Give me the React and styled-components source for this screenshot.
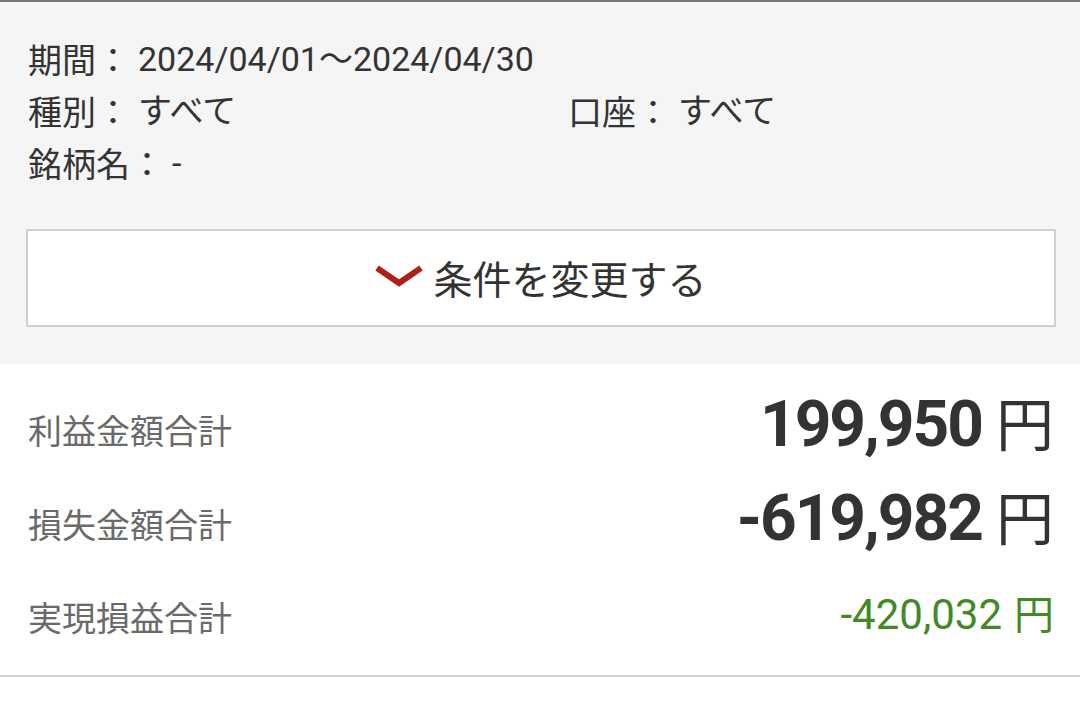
import React from "react";
import styled, { createGlobalStyle } from "styled-components";

const Global = createGlobalStyle`
  html, body { margin: 0; padding: 0; background: #ffffff; }
  body {
    font-family: Roboto, "Noto Sans CJK JP", sans-serif;
    color: #333333;
  }
  * { box-sizing: border-box; }
`;

const Page = styled.div`
  width: 1080px;
  height: 710px;
  overflow: hidden;
  background: #ffffff;
  border-top: 2px solid #74747c;
`;

const ConditionPanel = styled.section`
  background: #f5f5f5;
  padding: 31px 24px 37px 26px;
`;

const ConditionGrid = styled.div`
  display: grid;
  grid-template-columns: 540px 1fr;
  grid-auto-rows: 52px;
  padding-left: 2px;
`;

const ConditionItem = styled.div`
  grid-column: ${(p) => (p.$full ? "1 / -1" : "auto")};
  height: 52px;
  display: flex;
  align-items: center;
  font-size: 34px;
  color: #333333;
  white-space: nowrap;
`;

const Label = styled.span`
  font-family: "Noto Sans CJK JP", sans-serif;
  line-height: 1;
`;

const Value = styled.span`
  font-family: Roboto, "Noto Sans CJK JP", sans-serif;
  line-height: 1;
  margin-left: 8px;
`;

const ChangeButton = styled.button`
  margin-top: 40px;
  width: 100%;
  height: 98px;
  background: #ffffff;
  border: 2px solid #d0d0d0;
  display: flex;
  align-items: center;
  justify-content: center;
  gap: 10px;
  font-family: "Noto Sans CJK JP", sans-serif;
  font-size: 39px;
  color: #333333;
  padding: 0 0 2px 0;
  cursor: pointer;
`;

const Chevron = styled.svg`
  width: 48px;
  height: 24px;
  flex: none;
  margin-top: -2px;
`;

const Totals = styled.section`
  padding: 19px 26px 12px 28px;
  border-bottom: 2px solid #d0d0d0;
`;

const TotalRow = styled.div`
  display: flex;
  align-items: center;
  justify-content: space-between;
  height: ${(p) => p.$h}px;
`;

const TotalLabel = styled.span`
  font-family: "Noto Sans CJK JP", sans-serif;
  font-size: 34px;
  line-height: 1;
  color: #6a6a6a;
`;

const Amount = styled.span`
  font-family: Roboto, "Noto Sans CJK JP", sans-serif;
  font-size: ${(p) => (p.$big ? "64px" : "42px")};
  font-weight: ${(p) => (p.$big ? 700 : 400)};
  line-height: 1;
  color: ${(p) => p.$color || "#333333"};
  letter-spacing: ${(p) => (p.$big ? "-2px" : "0px")};
  white-space: nowrap;
  margin-bottom: ${(p) => (p.$big ? "12px" : "7px")};
`;

const Yen = styled.span`
  font-family: "Noto Sans CJK JP", sans-serif;
  font-weight: 400;
  line-height: 1;
  margin-left: ${(p) => (p.$big ? "14px" : "12px")};
  letter-spacing: 0;
  font-size: ${(p) => (p.$big ? "58px" : "40px")};
`;

export default function App() {
  return (
    <>
      <Global />
      <Page>
        <ConditionPanel>
          <ConditionGrid>
            <ConditionItem $full>
              <Label>期間：</Label>
              <Value>2024/04/01～2024/04/30</Value>
            </ConditionItem>
            <ConditionItem>
              <Label>種別：</Label>
              <Value>すべて</Value>
            </ConditionItem>
            <ConditionItem>
              <Label>口座：</Label>
              <Value>すべて</Value>
            </ConditionItem>
            <ConditionItem $full>
              <Label>銘柄名：</Label>
              <Value>-</Value>
            </ConditionItem>
          </ConditionGrid>
          <ChangeButton type="button">
            <Chevron viewBox="0 0 48 24" aria-hidden="true">
              <path d="M2 4 L24 19 L46 4" fill="none" stroke="#b0201a" strokeWidth="6" />
            </Chevron>
            条件を変更する
          </ChangeButton>
        </ConditionPanel>
        <Totals>
          <TotalRow $h={94}>
            <TotalLabel>利益金額合計</TotalLabel>
            <Amount $big>
              199,950<Yen $big>円</Yen>
            </Amount>
          </TotalRow>
          <TotalRow $h={94}>
            <TotalLabel>損失金額合計</TotalLabel>
            <Amount $big>
              -619,982<Yen $big>円</Yen>
            </Amount>
          </TotalRow>
          <TotalRow $h={92}>
            <TotalLabel>実現損益合計</TotalLabel>
            <Amount $color="#3f8a25">
              -420,032<Yen>円</Yen>
            </Amount>
          </TotalRow>
        </Totals>
      </Page>
    </>
  );
}
